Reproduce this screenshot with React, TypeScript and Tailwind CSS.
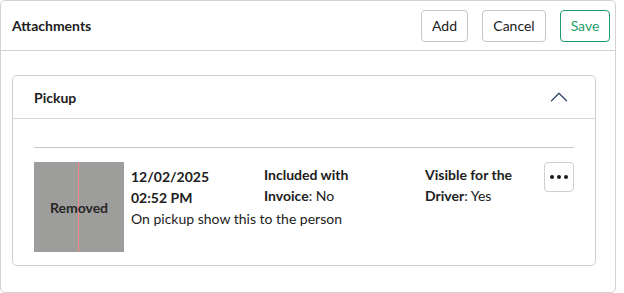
import { ChevronUp } from "lucide-react";

export default function App() {
  return (
    <div className="h-[293px] w-[624px] bg-white font-['Lato',sans-serif] text-[14px] text-[#212121]">
      <div className="h-[293px] w-[616px] rounded-[5px] border border-[#d2d2d2]">
        <div className="flex h-[50px] items-center justify-between border-b border-[#d2d2d2] pl-[11px] pr-[5px]">
          <h1 className="text-[14px] font-bold">Attachments</h1>
          <div className="flex items-center gap-[14px]">
            <button className="h-[32px] w-[47px] rounded-[4px] border border-[#c6c6c6] bg-white">
              Add
            </button>
            <button className="h-[32px] w-[64px] rounded-[4px] border border-[#c6c6c6] bg-white">
              Cancel
            </button>
            <button className="h-[32px] w-[50px] rounded-[4px] border border-[#1f9d6c] bg-white text-[#1f9d6c]">
              Save
            </button>
          </div>
        </div>

        <div className="pl-[11px] pr-[19px] pt-[24px]">
          <section className="rounded-[5px] border border-[#cfcfcf]">
            <div className="flex h-[43px] items-center justify-between border-b border-[#d9d9d9] pl-[21px] pr-[21px]">
              <h2 className="font-bold">Pickup</h2>
              <ChevronUp size={30} strokeWidth={1.05} className="text-[#34466a]" />
            </div>

            <div className="px-[21px] pb-[13px] pt-[28px]">
              <div className="border-t border-[#c8c8c8]" />
              <div className="mt-[14px] flex items-start">
                <div className="relative flex h-[90px] w-[90px] items-center justify-center bg-[#9d9e9c]">
                  <span className="absolute left-[44px] top-0 h-full w-px bg-[#f08a8a]" />
                  <span className="relative font-bold text-[#262626]">Removed</span>
                </div>

                <div className="ml-[7px] w-[126px] pt-[4px] leading-[21px]">
                  <div className="font-bold">12/02/2025</div>
                  <div className="font-bold">02:52 PM</div>
                  <div className="whitespace-nowrap">On pickup show this to the person</div>
                </div>

                <div className="ml-[7px] w-[161px] pt-[2px] leading-[21px]">
                  <span className="font-bold">Included with</span>
                  <br />
                  <span className="font-bold">Invoice</span>: No
                </div>

                <div className="w-[119px] pt-[2px] leading-[21px]">
                  <span className="font-bold">Visible for the</span>
                  <br />
                  <span className="font-bold">Driver</span>: Yes
                </div>

                <button className="flex h-[30px] w-[30px] items-center justify-center gap-[3px] rounded-[4px] border border-[#cfcfcf] bg-white">
                  <span className="h-[4px] w-[4px] rounded-full bg-[#1a1a1a]" />
                  <span className="h-[4px] w-[4px] rounded-full bg-[#1a1a1a]" />
                  <span className="h-[4px] w-[4px] rounded-full bg-[#1a1a1a]" />
                </button>
              </div>
            </div>
          </section>
        </div>
      </div>
    </div>
  );
}
